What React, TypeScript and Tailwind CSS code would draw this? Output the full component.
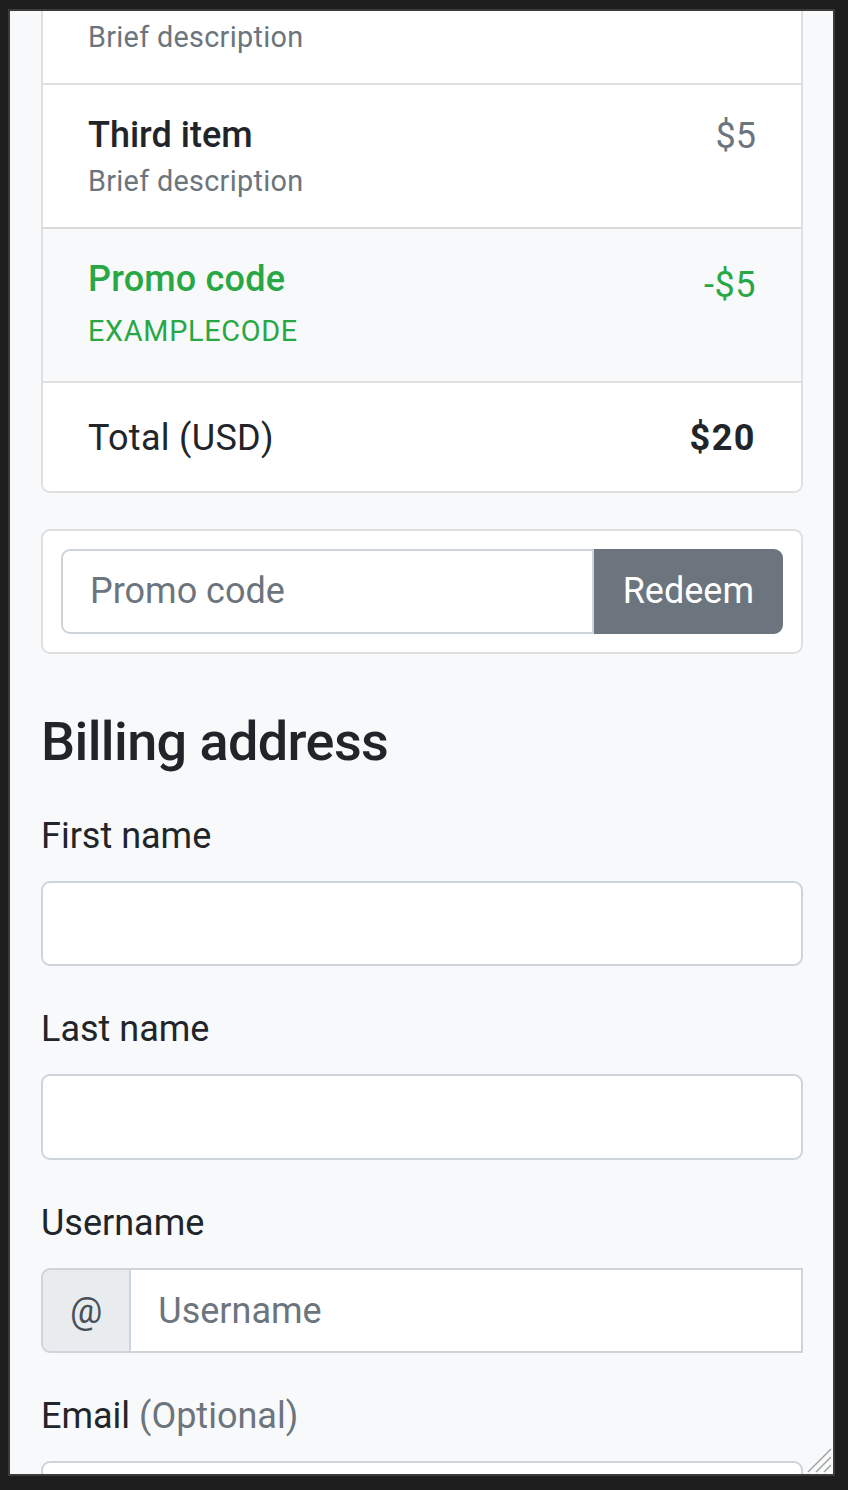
import React from "react";

function ItemRow({ title, price, first }: { title?: string; price?: string; first?: boolean }) {
  return (
    <li
      className={
        "flex justify-between px-[45px] pt-[29px] pb-[25px] bg-white leading-[1.25] " +
        (first ? "" : "border-t-2 border-[rgba(0,0,0,0.125)]")
      }
    >
      <div>
        <h6 className="m-0 h-[43.2px] text-[36px] font-medium leading-[1.2] text-[#212529]">{title}</h6>
        <small className="text-[28.8px] text-[#6c757d] tracking-[0.3px]">Brief description</small>
      </div>
      {price ? <span className="text-[#6c757d]">{price}</span> : null}
    </li>
  );
}

function Field({ label, children }: { label: React.ReactNode; children?: React.ReactNode }) {
  return (
    <div className="mb-[36px]">
      <label className="block mb-[18px] leading-[1.5]">{label}</label>
      {children ?? (
        <input
          type="text"
          className="block w-full h-[85.5px] px-[27px] bg-white border-2 border-[#ced4da] rounded-[9px] outline-none text-[#495057]"
        />
      )}
    </div>
  );
}

export default function App() {
  return (
    <div className="w-[848px] h-[1490px] bg-[#1e1e1f] pt-[9px] pl-[8px] overflow-hidden">
      <div className="w-[827px] h-[1467px] border-2 border-[#3b3b3c]">
        <div className="relative w-full h-full overflow-hidden bg-[#f8f9fa] [font-family:Roboto,sans-serif] text-[#212529] text-[36px] leading-[1.5] pl-[31px] pr-[30px]">
          <ul className="mt-[-72px] mb-[36px] bg-white border-2 border-[rgba(0,0,0,0.125)] rounded-[9px] overflow-hidden">
            <ItemRow first />
            <ItemRow title="Third item" price="$5" />
            <li className="flex justify-between px-[45px] pt-[29px] pb-[25px] bg-[#f8f9fa] border-t-2 border-[rgba(0,0,0,0.125)] text-[#28a745]">
              <div>
                <h6 className="m-0 text-[36px] font-medium leading-[1.2] tracking-[0.2px]">Promo code</h6>
                <small className="text-[28.8px] tracking-[0.7px]">EXAMPLECODE</small>
              </div>
              <span className="tracking-[0.5px]">-$5</span>
            </li>
            <li className="flex justify-between px-[45px] pt-[28px] pb-[26px] bg-white border-t-2 border-[rgba(0,0,0,0.125)]">
              <span className="tracking-[0.3px]">Total (USD)</span>
              <strong className="font-bold tracking-[1.5px]">$20</strong>
            </li>
          </ul>

          <form className="mb-[56px] p-[18px] bg-white border-2 border-[rgba(0,0,0,0.125)] rounded-[9px]">
            <div className="flex">
              <input
                type="text"
                placeholder="Promo code"
                className="flex-1 min-w-0 h-[85.5px] px-[27px] bg-white border-2 border-[#ced4da] rounded-l-[9px] outline-none placeholder:text-[#6c757d]"
              />
              <button
                type="button"
                className="h-[85.5px] px-[27px] bg-[#6c757d] border-2 border-[#6c757d] text-white rounded-r-[9px] leading-[1.5]"
              >
                Redeem
              </button>
            </div>
          </form>

          <h4 className="m-0 mb-[34px] text-[54px] font-medium leading-[1.2] tracking-[-0.6px]">Billing address</h4>

          <Field label="First name" />
          <Field label="Last name" />
          <Field label="Username">
            <div className="flex h-[85.5px]">
              <span className="flex items-center px-[27px] bg-[#e9ecef] border-2 border-[#ced4da] rounded-l-[9px] text-[#495057]">
                @
              </span>
              <input
                type="text"
                placeholder="Username"
                className="flex-1 min-w-0 h-full px-[27px] bg-white border-2 border-l-0 border-[#ced4da] outline-none placeholder:text-[#6c757d]"
              />
            </div>
          </Field>
          <Field
            label={
              <>
                Email <span className="text-[#6c757d]">(Optional)</span>
              </>
            }
          />

          <svg
            className="absolute right-[1px] bottom-[1px]"
            width="26"
            height="26"
            viewBox="0 0 26 26"
          >
            <line x1="2" y1="25" x2="25" y2="2" stroke="#a6a6a6" strokeWidth="1.6" />
            <line x1="10" y1="25" x2="25" y2="10" stroke="#a6a6a6" strokeWidth="1.6" />
            <line x1="18" y1="25" x2="25" y2="18" stroke="#a6a6a6" strokeWidth="1.6" />
          </svg>
        </div>
      </div>
    </div>
  );
}
